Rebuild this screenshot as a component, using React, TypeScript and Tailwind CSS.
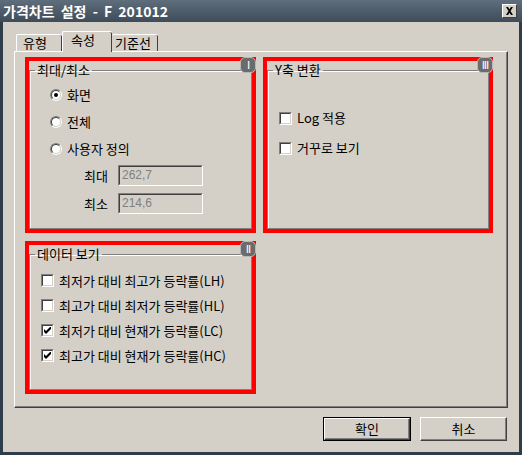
import type { ReactNode } from "react";

const KR = "font-['Noto_Sans_CJK_KR',sans-serif]";

function Badge({ label }: { label: string }) {
  return (
    <span className="absolute top-0 right-0 flex h-[16px] w-[16px] items-center justify-center rounded-[5px] border border-[#b8b8b8] bg-[#6b6b6b] text-[11px] leading-none text-white font-['DejaVu_Sans',sans-serif] tracking-[-1px]">
      {label}
    </span>
  );
}

function GroupBox({
  title,
  badge,
  className,
  children,
}: {
  title: string;
  badge: string;
  className: string;
  children: ReactNode;
}) {
  return (
    <div className={`relative ${className}`}>
      <div className="h-full border-4 border-[#ff0000]">
        <fieldset className="h-full border border-[#808080] shadow-[inset_1px_1px_0_#ffffff]">
          <legend className="ml-[5px] px-[2px] text-[13px] leading-[18px] text-black">
            {title}
          </legend>
          {children}
        </fieldset>
      </div>
      <Badge label={badge} />
    </div>
  );
}

function Radio({ checked }: { checked?: boolean }) {
  return (
    <span className="flex h-[12px] w-[12px] rounded-full border border-t-[#808080] border-l-[#808080] border-r-white border-b-white">
      <span className="flex h-full w-full items-center justify-center rounded-full border border-t-[#404040] border-l-[#404040] border-r-[#d4d0c8] border-b-[#d4d0c8] bg-white">
        {checked && <span className="h-[4px] w-[4px] rounded-full bg-black" />}
      </span>
    </span>
  );
}

function Check({ checked }: { checked?: boolean }) {
  return (
    <span className="flex h-[13px] w-[13px] shrink-0 border border-t-[#808080] border-l-[#808080] border-r-white border-b-white">
      <span className="flex h-full w-full items-center justify-center border border-t-[#404040] border-l-[#404040] border-r-[#d4d0c8] border-b-[#d4d0c8] bg-white">
        {checked && (
          <svg width="7" height="7" viewBox="0 0 7 7">
            <path d="M0 2v3l2 2 5-5V-1L2 4z" fill="#000" />
          </svg>
        )}
      </span>
    </span>
  );
}

function NumBox({ value }: { value: string }) {
  return (
    <div className="h-[21px] w-[85px] border border-t-[#808080] border-l-[#808080] border-r-white border-b-white">
      <div className="h-full border border-t-[#404040] border-l-[#404040] border-r-[#d4d0c8] border-b-[#d4d0c8] pl-[2px] text-[12px] leading-[17px] text-[#808080] font-['Liberation_Sans',sans-serif]">
        {value}
      </div>
    </div>
  );
}

const radios = [
  { label: "화면", checked: true },
  { label: "전체", checked: false },
  { label: "사용자 정의", checked: false },
];

const dataRows = [
  { label: "최저가 대비 최고가 등락률(LH)", checked: false },
  { label: "최고가 대비 최저가 등락률(HL)", checked: false },
  { label: "최저가 대비 현재가 등락률(LC)", checked: true },
  { label: "최고가 대비 현재가 등락률(HC)", checked: true },
];

export default function App() {
  return (
    <div className={`flex h-[455px] w-[522px] flex-col bg-[#2f3d4b] ${KR}`}>
      <div className="flex h-[22px] items-center justify-between bg-gradient-to-b from-[#5f6e7c] to-[#3e4c5a] pl-[3px] pr-[5px]">
        <span className="text-[14px] font-bold leading-none text-white [word-spacing:3px]">
          가격차트 설정 - F 201012
        </span>
        <span className="flex h-[14px] w-[15px] items-center justify-center border border-t-white border-l-white border-r-[#404040] border-b-[#404040] bg-[#d4d0c8]">
          <svg width="9" height="8" viewBox="0 0 9 8">
            <path d="M1 0h2l1.5 2.2L6 0h2L5.5 4 8 8H6L4.5 5.8 3 8H1l2.5-4z" fill="#000" />
          </svg>
        </span>
      </div>

      <div className="mx-[3px] mb-[3px] flex flex-1 flex-col bg-[#d4d0c8] pl-[11px] pr-[11px] pt-[9px]">
        <div className="relative z-10 flex h-[20px] items-end pl-[2px] text-[13px] text-black">
          <div className="h-[17px] w-[46px] rounded-t-[2px] border-l border-t border-white pl-[6px] leading-[16px] shadow-[inset_-1px_0_0_#404040]">
            유형
          </div>
          <div className="-mb-px h-[21px] w-[50px] rounded-t-[2px] border-l border-t border-white bg-[#d4d0c8] pl-[8px] leading-[15px] shadow-[inset_-1px_0_0_#404040]">
            속성
          </div>
          <div className="h-[17px] w-[46px] rounded-t-[2px] border-t border-white pl-[3px] leading-[16px] shadow-[inset_-1px_0_0_#404040]">
            기준선
          </div>
        </div>

        <div className="h-[357px] border border-t-white border-l-white border-r-[#404040] border-b-[#404040] pl-[10px] pt-[5px] shadow-[inset_-1px_-1px_0_#808080]">
          <div className="grid grid-cols-[231px_230px] gap-x-[7px] gap-y-[8px]">
            <GroupBox title="최대/최소" badge="I" className="h-[176px]">
              <div className="flex flex-col pl-[20px] pt-[2px] text-[13px]">
                {radios.map((r) => (
                  <div key={r.label} className="flex h-[27px] items-center gap-[5px]">
                    <Radio checked={r.checked} />
                    <span>{r.label}</span>
                  </div>
                ))}
                <div className="mt-[3px] flex flex-col gap-[7px] pl-[34px]">
                  <div className="flex items-center">
                    <span className="w-[34px]">최대</span>
                    <NumBox value="262,7" />
                  </div>
                  <div className="flex items-center">
                    <span className="w-[34px]">최소</span>
                    <NumBox value="214,6" />
                  </div>
                </div>
              </div>
            </GroupBox>

            <GroupBox title="Y축 변환" badge="III" className="h-[176px]">
              <div className="flex flex-col pl-[11px] pt-[24px] text-[13px]">
                <div className="flex h-[30px] items-center gap-[5px]">
                  <Check />
                  <span>Log 적용</span>
                </div>
                <div className="flex h-[30px] items-center gap-[5px]">
                  <Check />
                  <span>거꾸로 보기</span>
                </div>
              </div>
            </GroupBox>

            <GroupBox title="데이터 보기" badge="II" className="h-[153px]">
              <div className="flex flex-col pl-[11px] pt-[5px] text-[13px]">
                {dataRows.map((d) => (
                  <div key={d.label} className="flex h-[25px] items-center gap-[5px]">
                    <Check checked={d.checked} />
                    <span>{d.label}</span>
                  </div>
                ))}
              </div>
            </GroupBox>
          </div>
        </div>

        <div className="mt-[9px] flex justify-end gap-[9px] pr-px text-[13px]">
          <button className="h-[24px] w-[88px] border border-black">
            <span className="flex h-full w-full items-center justify-center border border-t-white border-l-white border-r-[#404040] border-b-[#404040] shadow-[inset_-1px_-1px_0_#808080]">
              확인
            </span>
          </button>
          <button className="flex h-[24px] w-[87px] items-center justify-center border border-t-white border-l-white border-r-[#404040] border-b-[#404040] shadow-[inset_-1px_-1px_0_#808080]">
            취소
          </button>
        </div>
      </div>
    </div>
  );
}
